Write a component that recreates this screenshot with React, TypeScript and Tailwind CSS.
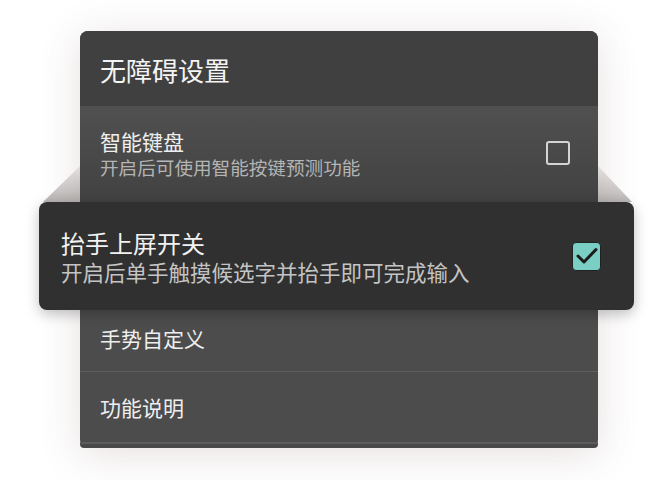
import React from "react";

const font = { fontFamily: '"Noto Sans CJK SC", "Noto Sans", sans-serif' };

export default function App() {
  return (
    <div
      className="relative w-[670px] h-[480px] bg-white overflow-hidden"
      style={font}
    >
      <div className="absolute left-[43px] top-[166px] w-[37px] h-[36px] bg-gradient-to-b from-[#efeeed] to-[#b9b7b6] [clip-path:polygon(100%_0,100%_100%,0_100%)]" />
      <div className="absolute left-[598px] top-[166px] w-[34px] h-[36px] bg-gradient-to-b from-[#efeeed] to-[#bdbbba] [clip-path:polygon(0_0,100%_100%,0_100%)]" />
      <div className="pt-[31px] pl-[80px]">
        <div className="relative w-[518px] rounded-[8px] bg-[#4c4c4c] shadow-[0_6px_40px_rgba(110,80,70,0.18)]">
          <div className="h-[75px] rounded-t-[8px] bg-[#404040] flex items-center pl-[20px] pt-[2px]">
            <span className="text-[26px] leading-[30px] text-[#f4f4f4]">无障碍设置</span>
          </div>
          <div className="h-[96px] bg-gradient-to-b from-[#505050] to-[#424242] flex pl-[20px] pr-[28px] pt-[22px]">
            <div className="flex-1 flex flex-col">
              <span className="text-[21px] leading-[26px] text-[#efefef]">智能键盘</span>
              <span className="text-[18.6px] leading-[26px] text-[#b4b4b4]">开启后可使用智能按键预测功能</span>
            </div>
            <div className="mt-[13px] w-[24px] h-[24px] rounded-[3px] border-[2.5px] border-[#d4d4d4]" />
          </div>
          <div className="-ml-[41px] -mr-[36px] h-[108px] rounded-[8px] bg-[#303030] flex items-center pl-[22px] pr-[33px] shadow-[0_4px_14px_rgba(0,0,0,0.25)] relative z-10">
            <div className="flex-1 flex flex-col pt-[2px]">
              <span className="text-[24px] leading-[30px] text-[#f2f2f2]">抬手上屏开关</span>
              <span className="text-[21.5px] leading-[28px] text-[#c4c4c4]">开启后单手触摸候选字并抬手即可完成输入</span>
            </div>
            <div className="w-[29px] h-[29px] rounded-[4px] bg-[#7bcec4] border-[1.5px] border-[#1e2221] flex items-center justify-center">
              <svg width="24" height="20" viewBox="0 0 24 20">
                <path d="M3 10 L9 16 L21 3.5" fill="none" stroke="#1c1c1c" strokeWidth="3" strokeLinecap="round" strokeLinejoin="round" />
              </svg>
            </div>
          </div>
          <div className="h-[62px] flex items-center pl-[20px] pb-[5px] border-b border-[#5f5f5f]">
            <span className="text-[21px] leading-[26px] text-[#efefef]">手势自定义</span>
          </div>
          <div className="h-[72px] flex items-center pl-[20px] border-b-[2px] border-[#5c5c5c]">
            <span className="text-[21px] leading-[26px] text-[#efefef]">功能说明</span>
          </div>
          <div className="h-[4px] rounded-b-[8px] bg-[#484848]" />
        </div>
      </div>
    </div>
  );
}
